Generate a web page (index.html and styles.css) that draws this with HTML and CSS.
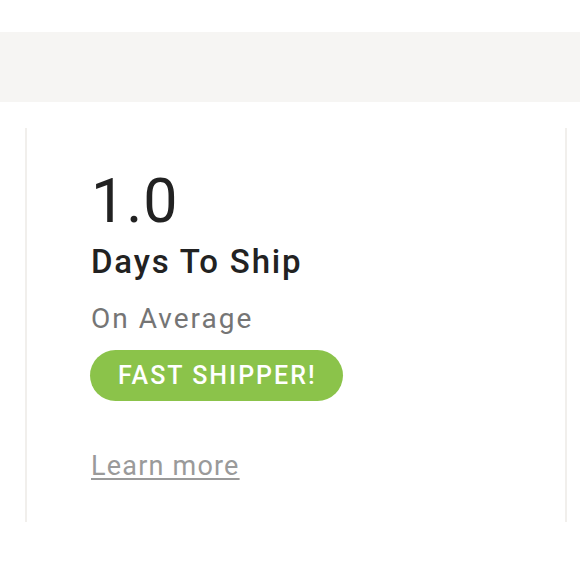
FILE: index.html
```html
<!DOCTYPE html>
<html>
<head>
<meta charset="utf-8">
<link rel="stylesheet" href="styles.css">
</head>
<body>
<div class="page">
  <div class="band"></div>
  <div class="card">
    <div class="value">1.0</div>
    <div class="title">Days To Ship</div>
    <div class="sub">On Average</div>
    <div class="badge">FAST SHIPPER!</div>
    <a class="learn" href="#">Learn more</a>
  </div>
</div>
</body>
</html>
```
FILE: styles.css
```css
html, body {
  margin: 0;
  padding: 0;
  background: #ffffff;
  font-family: Roboto, "Liberation Sans", sans-serif;
}
.page {
  padding-top: 32px;
}
.band {
  height: 70px;
  background: #f6f5f3;
}
.card {
  margin: 26px 13px 0 25px;
  height: 394px;
  border-left: 2px solid #f1efec;
  border-right: 2px solid #f1efec;
  padding: 38px 0 0 64px;
  box-sizing: border-box;
  display: flex;
  flex-direction: column;
  align-items: flex-start;
}
.value {
  font-size: 61px;
  line-height: 70px;
  color: #222222;
  font-weight: 400;
  letter-spacing: 1px;
}
.title {
  font-size: 33px;
  font-weight: 500;
  color: #222222;
  line-height: 40px;
  margin-top: 6px;
  letter-spacing: 1.8px;
}
.sub {
  font-size: 28px;
  color: #757575;
  line-height: 36px;
  margin-top: 19px;
  letter-spacing: 2px;
}
.badge {
  margin-top: 13px;
  margin-left: -1px;
  background: #8bc34a;
  color: #ffffff;
  font-size: 25px;
  line-height: 51px;
  height: 51px;
  padding: 0 26px 0 28px;
  border-radius: 26px;
  font-weight: 500;
  letter-spacing: 2px;
}
.learn {
  margin-top: 48px;
  font-size: 27px;
  line-height: 34px;
  color: #9a9a9a;
  letter-spacing: 1.2px;
  text-decoration: underline;
  text-decoration-thickness: 2px;
  text-underline-offset: 3px;
}
```
